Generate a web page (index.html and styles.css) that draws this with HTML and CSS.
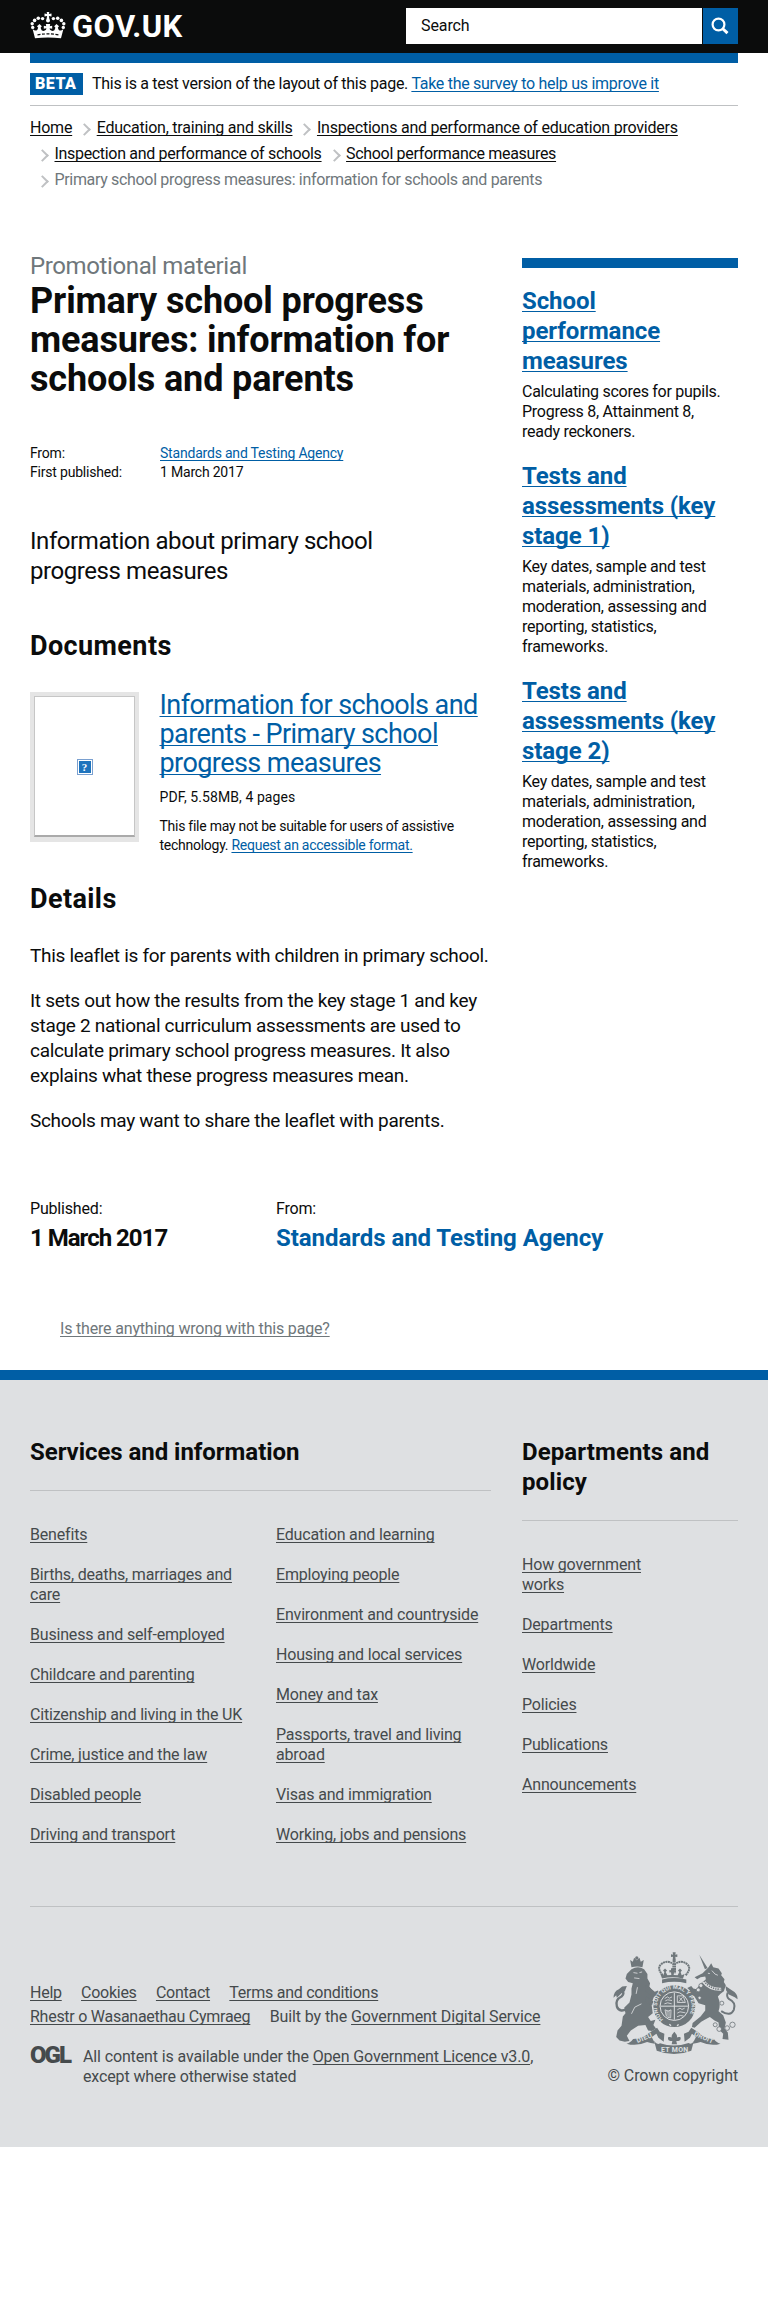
FILE: index.html
```html
<!DOCTYPE html>
<html lang="en">
<head>
<meta charset="utf-8">
<title>Primary school progress measures: information for schools and parents - GOV.UK</title>
<link rel="stylesheet" href="styles.css">
</head>
<body>
<header class="site-header">
  <a class="brand" href="#">
    <svg class="brand-crown" width="36" height="27" viewBox="0 0 36 27" fill="#fff">
      <path d="M16.700 0h2.600l-.4 2 2.600-.4v2.800l-2.600-.4.5 3h-2.800l.5-3-2.600.4V1.600l2.600.4z"/>
      <circle cx="18" cy="8.500" r="2"/>
      <circle cx="12.600" cy="6.600" r="1.700"/><circle cx="8.300" cy="6.200" r="1.800"/><circle cx="4.600" cy="8.400" r="1.800"/><circle cx="2.200" cy="11.800" r="1.700"/><circle cx="2.700" cy="15.400" r="1.700"/>
      <circle cx="23.400" cy="6.600" r="1.700"/><circle cx="27.700" cy="6.200" r="1.800"/><circle cx="31.400" cy="8.400" r="1.800"/><circle cx="33.800" cy="11.800" r="1.700"/><circle cx="33.300" cy="15.400" r="1.700"/>
      <path d="M2.600 17q2.500 2.500 4.600 1l1-2.200-1.200-1.600 2.500-2.200 2.300 2.200-1.200 1.600 1 2.400q2.200 1.600 4.400-.4l.4-1.600-2.600.5v-2.900l2.400.5-.4-2.200h4.400l-.4 2.200 2.400-.5v2.900l-2.600-.5.4 1.600q2.200 2 4.400.4l1-2.400-1.200-1.600 2.300-2.200 2.500 2.200-1.200 1.600 1 2.200q2.100 1.500 4.600-1L31 26.300q-13-1.600-26 0z"/>
      <path d="M7.500 22.800q10.500-1.800 21 0" fill="none" stroke="#0b0c0c" stroke-width="1.200" stroke-dasharray="3 1.500"/>
    </svg>
    <span class="brand-text">GOV.UK</span>
  </a>
  <form class="search">
    <span class="search-field">Search</span>
    <span class="search-button"><svg width="18" height="18" viewBox="0 0 18 18" fill="none" stroke="#fff"><circle cx="7.500" cy="7.500" r="5.900" stroke-width="2.200"/><path d="M11.500 11.500l5 4.700" stroke-width="3"/></svg></span>
  </form>
</header>
<div class="wrapper">
  <div class="brand-bar"></div>
  <div class="phase"><strong class="badge">BETA</strong><span>This is a test version of the layout of this page. <a href="#">Take the survey to help us improve it</a></span></div>
  <ol class="crumbs">
    <li class="first"><a href="#">Home</a></li><li><a href="#">Education, training and skills</a></li><li><a href="#">Inspections and performance of education providers</a></li>
    <li class="tight"><a href="#">Inspection and performance of schools</a></li><li class="tight"><a href="#">School performance measures</a></li>
    <li class="current">Primary school progress measures: information for schools and parents</li>
  </ol>
  <div class="columns">
    <main class="main">
      <p class="kicker">Promotional material</p>
      <h1>Primary school progress<br>measures: information for<br>schools and parents</h1>
      <dl class="meta">
        <dt>From:</dt><dd><a href="#">Standards and Testing Agency</a></dd>
        <dt>First published:</dt><dd>1 March 2017</dd>
      </dl>
      <p class="lead">Information about primary school<br>progress measures</p>
      <h2>Documents</h2>
      <section class="attachment">
        <div class="thumb"><div class="thumb-page"><span class="missing">?</span></div></div>
        <div class="attachment-info">
          <h3><a href="#">Information for schools and<br>parents - Primary school<br>progress measures</a></h3>
          <p class="file">PDF, 5.58MB, 4 pages</p>
          <p class="access">This file may not be suitable for users of assistive<br>technology. <a href="#">Request an accessible format.</a></p>
        </div>
      </section>
      <h2 class="details-title">Details</h2>
      <div class="body-copy">
        <p>This leaflet is for parents with children in primary school.</p>
        <p>It sets out how the results from the key stage 1 and key<br>stage 2 national curriculum assessments are used to<br>calculate primary school progress measures. It also<br>explains what these progress measures mean.</p>
        <p>Schools may want to share the leaflet with parents.</p>
      </div>
    </main>
    <aside class="related">
      <h2><a href="#">School<br>performance<br>measures</a></h2>
      <p>Calculating scores for pupils.<br>Progress 8, Attainment 8,<br>ready reckoners.</p>
      <h2><a href="#">Tests and<br>assessments (key<br>stage 1)</a></h2>
      <p>Key dates, sample and test<br>materials, administration,<br>moderation, assessing and<br>reporting, statistics,<br>frameworks.</p>
      <h2><a href="#">Tests and<br>assessments (key<br>stage 2)</a></h2>
      <p>Key dates, sample and test<br>materials, administration,<br>moderation, assessing and<br>reporting, statistics,<br>frameworks.</p>
    </aside>
  </div>
  <div class="published">
    <div><span>Published:</span><strong class="date">1 March 2017</strong></div>
    <div><span>From:</span><strong><a href="#">Standards and Testing Agency</a></strong></div>
  </div>
  <p class="report"><a href="#">Is there anything wrong with this page?</a></p>
</div>
<footer class="footer">
  <div class="categories">
    <section class="services">
      <h2>Services and information</h2>
      <div class="link-columns">
        <ul>
          <li><a href="#">Benefits</a></li><li><a href="#">Births, deaths, marriages and<br>care</a></li><li><a href="#">Business and self-employed</a></li><li><a href="#">Childcare and parenting</a></li><li><a href="#">Citizenship and living in the UK</a></li><li><a href="#">Crime, justice and the law</a></li><li><a href="#">Disabled people</a></li><li><a href="#">Driving and transport</a></li>
        </ul>
        <ul>
          <li><a href="#">Education and learning</a></li><li><a href="#">Employing people</a></li><li><a href="#">Environment and countryside</a></li><li><a href="#">Housing and local services</a></li><li><a href="#">Money and tax</a></li><li><a href="#">Passports, travel and living<br>abroad</a></li><li><a href="#">Visas and immigration</a></li><li><a href="#">Working, jobs and pensions</a></li>
        </ul>
      </div>
    </section>
    <section class="departments">
      <h2>Departments and<br>policy</h2>
      <ul>
        <li><a href="#">How government<br>works</a></li><li><a href="#">Departments</a></li><li><a href="#">Worldwide</a></li><li><a href="#">Policies</a></li><li><a href="#">Publications</a></li><li><a href="#">Announcements</a></li>
      </ul>
    </section>
  </div>
  <div class="footer-meta">
    <div class="footer-links">
      <p class="row"><a href="#">Help</a><a href="#">Cookies</a><a href="#">Contact</a><a href="#">Terms and conditions</a></p>
      <p class="row"><a href="#">Rhestr o Wasanaethau Cymraeg</a><span class="built">Built by the <a href="#">Government Digital Service</a></span></p>
      <div class="licence"><span class="ogl">OGL</span><p>All content is available under the <a href="#">Open Government Licence v3.0</a>,<br>except where otherwise stated</p></div>
    </div>
    <div class="copyright">
      <svg class="crest" width="125" height="102" viewBox="21 18 375 307" fill="#6f777b">
        <!-- lion -->
        <path d="M76 64l-4-22 8 5 4-12 8 8 8-8 4 12 9-5-4 22q-16-5-33 0z"/>
        <circle cx="92" cy="36" r="5"/>
        <path d="M76 70q20-12 38 0l10 14 0 14 8 14-2 10 10 14 4 16-8 20 4 30-14 12 8 12 14-4-6 16 8 10-12 8-12-2-8-16-22 2-22 14-12 16 8 16-14 2-16-4-10-10 4-20 12-14 4-28 8-10-4-16 16-16 6-24 0-18 4-16-14-4-8-10 4-14z"/>
        <path d="M120 116l26 22 10-4 2 10-16 10-24-18zM120 152l22 14-4 12-20-10z"/>
        <path d="M70 186q-30 18-38-4-6-20 14-30 10-8 2-18" fill="none" stroke="#6f777b" stroke-width="7"/>
        <path d="M22 156q0-20 16-26l10-8 14-2-6 16-10 6-14 14-2-8z"/>
        <path d="M82 80l12 2M100 80l8-2M84 96l16 2M76 204l10-20 20-10M94 124l-4 20" fill="none" stroke="#dee0e2" stroke-width="2.500"/>
        <!-- unicorn -->
        <path d="M280 26l25 40-8 4z"/>
        <path d="M290 82l18-18 8-12 6 12 16 4 10 14-2 6 10 12-2 8 6 10-6 18-10 8-8 8q10 22 2 44l14 12 8 22-4 18 10 12 2 22-18-2 2-16-12-12-2-22-12-6-14-10q-12 6-26 14l-20 18-8-2 2-12 24-20 14-18 0-16-20-6-14-22-16 4-6-8 10-12-8-8 12-6 6 8 10 2 10-16 18-14-2-8-14 2-10 6-8-6z"/>
        <path d="M346 196q28 18 38-4 8-22-14-32-10-8-4-20" fill="none" stroke="#6f777b" stroke-width="6"/>
        <path d="M395 160q2-16-16-26l-20-14 2 14 8 12 18 8z"/>
        <path d="M292 106q20 26 54 24" fill="none" stroke="#dee0e2" stroke-width="9"/>
        <path d="M294 105q20 26 50 25" fill="none" stroke="#6f777b" stroke-width="5" stroke-dasharray="4 3"/>
        <path d="M306 82l6 1M318 74q10 14 18 14" fill="none" stroke="#dee0e2" stroke-width="2.500"/>
        <g fill="#dee0e2" stroke="#6f777b" stroke-width="2.500"><circle cx="285" cy="119" r="6"/><circle cx="277" cy="132" r="6"/><circle cx="281" cy="156" r="5"/><circle cx="348" cy="172" r="6"/><circle cx="328" cy="237" r="6"/><circle cx="340" cy="250" r="7"/><circle cx="364" cy="247" r="7"/><circle cx="380" cy="237" r="8"/></g>
        <!-- royal crown -->
        <path d="M200 19h9l-1 7 6-1v8l-6-1 1 10h-9l1-10-6 1v-8l6 1z"/>
        <circle cx="204.500" cy="45" r="5"/>
        <path d="M170 88q-18-20-6-32 18-16 38-2v28M239 88q18-20 6-32-18-16-38-2v28" fill="none" stroke="#6f777b" stroke-width="6" stroke-dasharray="6 1.500"/>
        <path d="M163 84l9 4 3-10-4-4 6-6 6 6-4 4 5 10 12-1-1-8-5 1v-8l5 1v-6h9v6l5-1v8l-5-1-1 8 12 1 5-10-4-4 6-6 6 6-4 4 3 10 9-4-5 14q-31-8-63 0zM168 101q36-9 73 0v11q-36-9-73 0z"/>
        <!-- shield and garter -->
        <circle cx="205" cy="181" r="63"/>
        <circle cx="205" cy="181" r="43" fill="none" stroke="#dee0e2" stroke-width="3"/>
        <path d="M205 140v82M164 181h82" stroke="#dee0e2" stroke-width="3"/>
        <g fill="none" stroke="#dee0e2" stroke-width="2.500"><path d="M176 158l8-5 6 4 8-4M178 165l7-3 13 2M175 174l10-3 12 3M214 150h18l6 20h-24zM220 155l12 13M230 154l-12 14M214 192l8-5 6 4 8-4M214 202l8-4 16 3M213 213l10-4 10 2"/><path d="M177 192l3 16q4 10 14 8l1-24q-8 8-18 0M183 194v16M189 194v20"/></g>
        <path id="garter" d="M171.700 221A52 52 0 1 1 238.300 221" fill="none"/>
        <text class="motto" font-size="17"><textPath href="#garter" textLength="232">HONI SOIT QUI MAL Y PENSE</textPath></text>
        <path d="M190 235l5 5M213 240l5-4" stroke="#dee0e2" stroke-width="4"/>
        <!-- ribbon -->
        <path d="M61 294q10-1 20-14 28-2 50-20l22-14 8 12 14 6-2 24-16-12-6-12-14 10 10 20q-14-2-24-5-32 14-62 5zM344 294q-10-1-20-14-28-2-46-20l-22-14-8 12-14 6 2 24 16-12 6-12 12 10-10 20q14-2 24-5 32 14 60 5z"/>
        <path d="M144 285q8 14 18 8 42 14 86-1 10 6 16-7l-8 30q-52 20-104 0z"/>
        <path d="M205 258q14 15 4 22 2-8 14-6 4 10-6 12h-6l2 10h-16l2-10h-6q-10-2-6-12 12-2 14 6-10-7 4-22z"/>
        <g class="motto" font-size="21"><text transform="translate(94 292) rotate(-22)" textLength="49">DIEU</text><text x="165" y="318" textLength="82">ET MON</text><text transform="translate(263 269) rotate(24)" textLength="61">DROIT</text></g>
      </svg>
      <p>© Crown copyright</p>
    </div>
  </div>
</footer>
</body>
</html>
```
FILE: styles.css
```css
* { box-sizing: border-box; margin: 0; padding: 0; }
body { font-family: Roboto, "Liberation Sans", sans-serif; font-size: 16px; line-height: 20px; letter-spacing: -0.18px; color: #0b0c0c; background: #fff; white-space: nowrap; }
a { color: #005ea5; text-decoration: underline; text-underline-offset: 2px; text-decoration-thickness: 1px; text-decoration-skip-ink: none; }
ul, ol { list-style: none; }
.site-header { height: 53px; background: #0b0c0c; padding: 0 30px; display: flex; justify-content: space-between; }
.brand { display: flex; gap: 6px; padding-top: 12px; text-decoration: none; color: #fff; }
.brand-text { font-weight: 700; font-size: 31px; line-height: 29px; letter-spacing: 0.4px; }
.search { display: flex; gap: 1px; padding-top: 8px; height: 44px; }
.search-field { width: 296px; background: #fff; padding: 8px 15px; letter-spacing: -0.1px; }
.search-button { width: 35px; background: #005ea5; display: flex; padding: 9px 8px; }
.wrapper { padding: 0 30px; }
.brand-bar { height: 10px; background: #005ea5; }
.phase { height: 43px; padding-top: 10px; border-bottom: 1px solid #bfc1c3; display: flex; gap: 9px; line-height: 22px; letter-spacing: -0.29px; }
.badge { width: 53px; height: 22px; background: #005ea5; color: #fff; padding-left: 5px; font-weight: 900; letter-spacing: 0.5px; }
.crumbs { display: flex; flex-wrap: wrap; padding-top: 9px; line-height: 26px; height: 152px; align-content: flex-start; letter-spacing: -0.22px; }
.crumbs a { color: #0b0c0c; }
.crumbs li { padding-left: 24.5px; position: relative; }
.crumbs li.first { padding-left: 0; }
.crumbs .tight { letter-spacing: -0.32px; }
.crumbs li:not(.first)::before { content: ""; position: absolute; left: 8px; top: 10px; width: 7px; height: 7px; border: solid #bfc1c3; border-width: 2px 2px 0 0; transform: rotate(45deg); }
.crumbs .current { color: #6f777b; letter-spacing: -0.33px; }
.columns { display: flex; justify-content: space-between; }
.main { width: 461px; }
.kicker { font-size: 24px; line-height: 30px; letter-spacing: -0.38px; color: #6f777b; margin-top: -7px; }
h1 { font-size: 36px; line-height: 39px; letter-spacing: -0.13px; margin-top: 1px; }
.meta { display: grid; grid-template-columns: 130px 1fr; font-size: 14px; line-height: 19px; letter-spacing: -0.2px; margin-top: 45px; }
.lead { font-size: 24px; line-height: 30px; letter-spacing: -0.43px; margin-top: 44px; }
.main h2 { font-size: 27px; line-height: 30px; letter-spacing: 0.4px; margin-top: 45px; }
.attachment { display: flex; gap: 20.5px; margin-top: 31px; }
.thumb { flex: none; width: 109px; height: 150px; border: 4px solid #e5e5e5; border-bottom-width: 5px; background: #fff; }
.thumb-page { height: 141px; border: 1px solid #c6c6c6; border-bottom: 2px solid #aaa; display: flex; align-items: center; justify-content: center; padding-top: 2px; }
.missing { width: 16px; height: 16px; border: 1px solid #7aa0d0; background: #1f74bd; box-shadow: inset 0 0 0 1px #fff; color: #fff; font: 700 11px/14px "Liberation Serif", serif; text-align: center; }
.attachment h3 { font-size: 27px; font-weight: 400; line-height: 29px; letter-spacing: -0.56px; margin-top: -1px; }
.file, .access { font-size: 14px; line-height: 19px; }
.file { margin-top: 10px; letter-spacing: 0.08px; }
.access { margin-top: 10px; letter-spacing: -0.26px; }
.main .details-title { margin-top: 29px; }
.body-copy { margin-top: 29px; font-size: 19px; line-height: 25px; letter-spacing: -0.31px; }
.body-copy p { margin-bottom: 20px; }
.related { width: 216px; border-top: 10px solid #005ea5; letter-spacing: -0.27px; }
.related h2 { font-size: 24px; line-height: 30px; letter-spacing: -0.08px; font-weight: 700; margin-top: 19px; }
.related h2:first-child { margin-top: 18px; }
.related p { margin-top: 6px; }
.published { display: grid; grid-template-columns: 246px 1fr; margin-top: 46px; }
.published span { display: block; }
.published strong { display: block; font-size: 24px; line-height: 30px; letter-spacing: -0.05px; margin-top: 4px; }
.published .date { letter-spacing: -1px; }
.published a { text-decoration: none; }
.report { padding: 66px 0 31px 30px; }
.report a { color: #6f777b; }
.footer { border-top: 10px solid #005ea5; background: #dee0e2; height: 777px; padding: 57px 30px 0; color: #454a4c; }
.footer a { color: #454a4c; }
.categories { display: flex; justify-content: space-between; height: 470px; border-bottom: 1px solid #bfc1c3; }
.categories h2 { font-size: 24px; line-height: 30px; letter-spacing: -0.05px; color: #0b0c0c; padding-bottom: 23px; border-bottom: 1px solid #bfc1c3; }
.services { width: 461px; }
.departments { width: 216px; }
.departments h2 { letter-spacing: 0.1px; }
.link-columns { display: grid; grid-template-columns: 246px 1fr; }
.categories ul { padding-top: 34px; display: flex; flex-direction: column; gap: 20px; }
.footer-meta { display: flex; justify-content: space-between; padding-top: 45px; }
.footer-links { padding-top: 29px; }
.row { display: flex; gap: 19.3px; line-height: 24px; letter-spacing: -0.26px; }
.row .built { letter-spacing: -0.1px; }
.licence { display: flex; margin-top: 18px; letter-spacing: -0.13px; }
.ogl { width: 53px; font-size: 24px; line-height: 16px; font-weight: 900; letter-spacing: -2px; }
.copyright { text-align: right; letter-spacing: -0.12px; }
.crest { display: block; margin: 0 0 12px auto; }
.motto { font-family: Roboto, sans-serif; font-weight: 700; fill: #dee0e2; letter-spacing: 0; }
```
